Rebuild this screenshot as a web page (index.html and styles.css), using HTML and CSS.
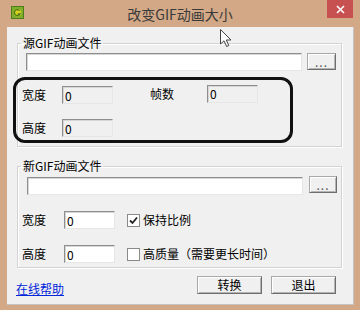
FILE: index.html
```html
<!DOCTYPE html>
<html lang="zh-CN">
<head>
    <meta charset="UTF-8">
    <meta name="viewport" content="width=device-width, initial-scale=1.0">
    <title>改变GIF动画大小</title>
    <link rel="stylesheet" href="styles.css">
</head>
<body>

    <div class="window">
        <div class="titlebar">
            <span class="app-icon">
                <svg width="13" height="13" viewBox="0 0 13 13">
                    <rect x="0.5" y="0.5" width="12" height="12" fill="#7fae2c" stroke="#4f7d17"/>
                    <circle cx="6.5" cy="6.8" r="3.8" fill="#d9d020"/>
                    <path d="M8.6 4.6 A3 3 0 1 0 9 8 L6.8 8" fill="none" stroke="#4f7d17" stroke-width="1.4"/>
                </svg>
            </span>
            <span class="title">改变GIF动画大小</span>
            <span class="close">
                <svg width="9" height="9" viewBox="0 0 9 9">
                    <path d="M1 1 L8 8 M8 1 L1 8" stroke="#fff" stroke-width="1.6"/>
                </svg>
            </span>
        </div>

        <div class="client">
            <fieldset class="group">
                <legend>源GIF动画文件</legend>
                <div class="file-row">
                    <input type="text" class="field path" value="">
                    <button class="btn browse">...</button>
                </div>
                <div class="info-grid">
                    <label>宽度</label>
                    <input type="text" class="field num readonly" value="0" readonly>
                    <label class="raised">帧数</label>
                    <input type="text" class="field num readonly raised" value="0" readonly>
                    <label>高度</label>
                    <input type="text" class="field num readonly" value="0" readonly>
                </div>
            </fieldset>

            <fieldset class="group second">
                <legend>新GIF动画文件</legend>
                <div class="file-row">
                    <input type="text" class="field path" value="">
                    <button class="btn browse">...</button>
                </div>
                <div class="option-grid">
                    <label>宽度</label>
                    <input type="text" class="field num" value="0">
                    <span class="check">
                        <svg width="9" height="9" viewBox="0 0 9 9">
                            <path d="M1 4.5 L3.5 7 L8 1.5" fill="none" stroke="#222" stroke-width="1.8"/>
                        </svg>
                    </span>
                    <label>保持比例</label>
                    <label>高度</label>
                    <input type="text" class="field num" value="0">
                    <span class="check"></span>
                    <label>高质量（需要更长时间）</label>
                </div>
            </fieldset>

            <div class="footer">
                <a href="#" class="help">在线帮助</a>
                <div class="actions">
                    <button class="btn action">转换</button>
                    <button class="btn action">退出</button>
                </div>
            </div>
        </div>

        <div class="highlight"></div>
        <svg class="cursor" width="13" height="19" viewBox="0 0 13 19">
            <path d="M0.5 0.5 L0.5 15 L4 11.8 L6.6 17.5 L8.8 16.5 L6.3 11 L11 11 Z" fill="#fff" stroke="#444"/>
        </svg>
    </div>

</body>
</html>
```

FILE: styles.css
```css
body {
    margin: 0;
    padding: 0;
    font-family: "Noto Sans CJK SC", "Liberation Sans", sans-serif;
    font-size: 12px;
    color: #000;
}

.window {
    position: relative;
    width: 360px;
    height: 310px;
    background: #d2a887;
    display: flex;
    flex-direction: column;
    overflow: hidden;
}

.titlebar {
    height: 27px;
    display: flex;
    align-items: flex-start;
    padding-left: 11px;
    padding-right: 7px;
}
.titlebar .app-icon {
    width: 13px;
    height: 13px;
    margin-top: 6px;
    display: flex;
}
.titlebar .title {
    flex: 1;
    text-align: center;
    padding-left: 9px;
    font-size: 14px;
    line-height: 16px;
    margin-top: 6px;
    color: #3a3a3a;
}
.titlebar .close {
    width: 26px;
    height: 18px;
    background: #c75050;
    display: flex;
    justify-content: center;
    align-items: center;
}

.client {
    margin: 0 6px 0 7px;
    height: 278px;
    background: #f0f0f0;
    box-sizing: border-box;
    padding: 8px 11px 0 10px;
    border-right: 1px solid #c4c4c4;
    border-bottom: 1px solid #c4c4c4;
}

.group {
    margin: 0;
    min-width: 0;
    border: 1px solid #d3d3d3;
    box-shadow: inset 1px 1px #fff, 1px 1px #fff;
    padding: 2px 5px 9px 4px;
}
.group legend {
    padding: 0 2px;
    line-height: 16px;
    margin-left: -1px;
}
.group.second {
    margin-top: 11px;
    padding: 3px 4px 4px 4px;
}

.field {
    box-sizing: border-box;
    height: 18px;
    margin: 0;
    border: 1px solid;
    border-color: #8e8e8e #e6e6e6 #e6e6e6 #8e8e8e;
    box-shadow: inset 1px 1px #d6d6d6;
    background: #fff;
    font-family: inherit;
    font-size: 12px;
    line-height: 14px;
    padding: 0 2px;
    outline: 0;
    color: #000;
}
.field.readonly {
    background: #f0f0f0;
}
.field.num {
    width: 51px;
}

.file-row {
    display: flex;
    align-items: flex-start;
    margin-left: 4px;
}
.file-row .path {
    width: 277px;
}
.second .file-row {
    margin-left: 5px;
}

.btn {
    box-sizing: border-box;
    margin: 0;
    padding: 0;
    border: 1px solid;
    border-color: #a8a8a8 #6e6e6e #6e6e6e #a8a8a8;
    box-shadow: inset 1px 1px #fff, inset -1px -1px #b4b4b4;
    background: #f0f0f0;
    font-family: inherit;
    font-size: 12px;
    color: #000;
}
.btn.browse {
    width: 29px;
    height: 17px;
    margin-left: 5px;
    line-height: 10px;
    letter-spacing: 1px;
    color: #555;
}
.second .btn.browse {
    width: 28px;
    margin-left: 6px;
    margin-top: -1px;
}

.info-grid {
    display: grid;
    grid-template-columns: 40px 51px 94px 51px;
    row-gap: 15px;
    margin-top: 15px;
    align-items: center;
}
.info-grid label {
    line-height: 18px;
}
.info-grid label:nth-of-type(2) {
    margin-left: 37px;
}
.info-grid .raised {
    margin-top: -3px;
}

.option-grid {
    display: grid;
    grid-template-columns: 42px 51px 25px auto;
    row-gap: 16px;
    margin-top: 16px;
    align-items: center;
}
.option-grid label {
    line-height: 18px;
}
.option-grid .check {
    margin-left: 12px;
}
.option-grid .check + label {
    margin-left: 3px;
}

.check {
    box-sizing: border-box;
    width: 13px;
    height: 13px;
    border: 1px solid #8a8a8a;
    background: #fff;
    display: flex;
    justify-content: center;
    align-items: center;
}

.footer {
    display: flex;
    justify-content: space-between;
    align-items: flex-start;
    margin-top: 8px;
    margin-left: -1px;
    padding-right: 6px;
}
.footer .help {
    color: #0026d9;
    text-decoration: underline;
    line-height: 16px;
    margin-top: 5px;
}
.footer .actions {
    display: flex;
    gap: 9px;
}
.btn.action {
    width: 65px;
    height: 18px;
    line-height: 14px;
}

.highlight {
    position: absolute;
    left: 13px;
    top: 77px;
    width: 280px;
    height: 66px;
    box-sizing: border-box;
    border: 3px solid #111;
    border-radius: 12px;
}

.cursor {
    position: absolute;
    left: 220px;
    top: 29px;
}
```
